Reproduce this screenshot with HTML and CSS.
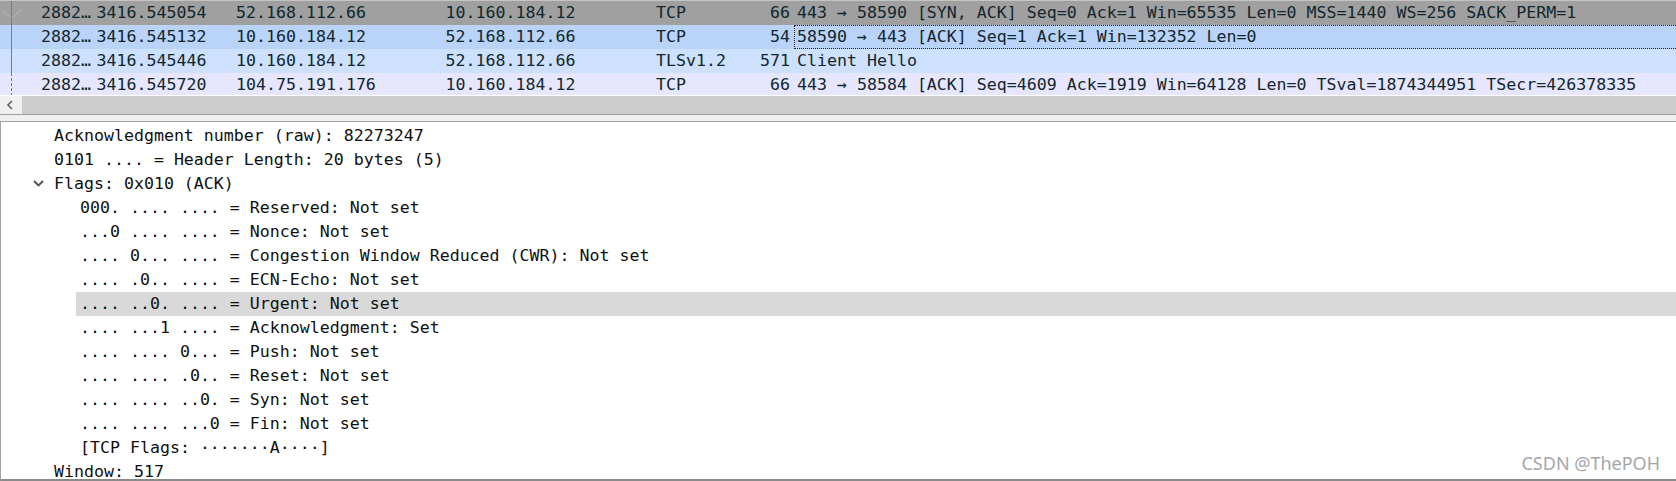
FILE: index.html
```html
<!DOCTYPE html>
<html>
<head>
<meta charset="utf-8">
<link rel="stylesheet" href="styles.css">
</head>
<body>
<div class="app">
  <div class="plist">
    <div class="rows">
      <div class="prow r-synack">
        <div class="gut"><svg width="41" height="24" viewBox="0 0 41 24"><polyline points="2,10 12,17 22,8" fill="none" stroke="#b8b8b8" stroke-width="1"/><line x1="11.5" y1="0" x2="11.5" y2="24" stroke="#7c7c7c" stroke-width="1"/></svg></div>
        <div class="c">2882…</div><div class="c">3416.545054</div><div class="c">52.168.112.66</div><div class="c">10.160.184.12</div><div class="c">TCP</div><div class="c len">66</div><div class="c info">443 → 58590 [SYN, ACK] Seq=0 Ack=1 Win=65535 Len=0 MSS=1440 WS=256 SACK_PERM=1</div>
      </div>
      <div class="prow r-sel">
        <div class="gut"><svg width="41" height="24" viewBox="0 0 41 24"><line x1="11.5" y1="0" x2="11.5" y2="24" stroke="#7c7c7c" stroke-width="1"/></svg></div>
        <div class="c">2882…</div><div class="c">3416.545132</div><div class="c">10.160.184.12</div><div class="c">52.168.112.66</div><div class="c">TCP</div><div class="c len">54</div><div class="c info focus">58590 → 443 [ACK] Seq=1 Ack=1 Win=132352 Len=0</div>
      </div>
      <div class="prow r-hover">
        <div class="gut"><svg width="41" height="24" viewBox="0 0 41 24"><line x1="11.5" y1="0" x2="11.5" y2="24" stroke="#7c7c7c" stroke-width="1"/></svg></div>
        <div class="c">2882…</div><div class="c">3416.545446</div><div class="c">10.160.184.12</div><div class="c">52.168.112.66</div><div class="c">TLSv1.2</div><div class="c len">571</div><div class="c info">Client Hello</div>
      </div>
      <div class="prow r-tcp">
        <div class="gut"><svg width="41" height="24" viewBox="0 0 41 24"><line x1="11.5" y1="0" x2="11.5" y2="24" stroke="#7c7c7c" stroke-width="1" stroke-dasharray="3,2"/></svg></div>
        <div class="c">2882…</div><div class="c">3416.545720</div><div class="c">104.75.191.176</div><div class="c">10.160.184.12</div><div class="c">TCP</div><div class="c len">66</div><div class="c info">443 → 58584 [ACK] Seq=4609 Ack=1919 Win=64128 Len=0 TSval=1874344951 TSecr=426378335</div>
      </div>
    </div>
    <div class="hscroll">
      <div class="sbtn"><svg width="21" height="18" viewBox="0 0 21 18"><polyline points="12,5 8,9 12,13" fill="none" stroke="#606060" stroke-width="1.6"/></svg></div>
      <div class="thumb"></div>
    </div>
  </div>
  <div class="split"></div>
  <div class="details">
    <div class="drow l1">Acknowledgment number (raw): 82273247</div>
    <div class="drow l1">0101 .... = Header Length: 20 bytes (5)</div>
    <div class="drow l0"><span class="chev"><svg width="11" height="24" viewBox="0 0 11 24"><polyline points="1,9 5.5,13.5 10,9" fill="none" stroke="#505050" stroke-width="1.8"/></svg></span>Flags: 0x010 (ACK)</div>
    <div class="drow l2">000. .... .... = Reserved: Not set</div>
    <div class="drow l2">...0 .... .... = Nonce: Not set</div>
    <div class="drow l2">.... 0... .... = Congestion Window Reduced (CWR): Not set</div>
    <div class="drow l2">.... .0.. .... = ECN-Echo: Not set</div>
    <div class="drow l2 hl">.... ..0. .... = Urgent: Not set</div>
    <div class="drow l2">.... ...1 .... = Acknowledgment: Set</div>
    <div class="drow l2">.... .... 0... = Push: Not set</div>
    <div class="drow l2">.... .... .0.. = Reset: Not set</div>
    <div class="drow l2">.... .... ..0. = Syn: Not set</div>
    <div class="drow l2">.... .... ...0 = Fin: Not set</div>
    <div class="drow l2">[TCP Flags: ·······A····]</div>
    <div class="drow l1">Window: 517</div>
    <div class="watermark">CSDN @ThePOH</div>
  </div>
</div>
</body>
</html>
```

FILE: styles.css
```css
html, body {
  margin: 0;
  padding: 0;
  background: #ffffff;
}
.app {
  width: 1676px;
  height: 481px;
  display: flex;
  flex-direction: column;
  overflow: hidden;
  font-family: "DejaVu Sans Mono", "Liberation Mono", monospace;
  font-size: 16.6px;
}
.plist {
  display: flex;
  flex-direction: column;
  background: #ffffff;
}
.rows {
  height: 95px;
  overflow: hidden;
  border-bottom: 1px solid #ffffff;
}
.prow {
  display: grid;
  grid-template-columns: 41px 55.5px 139.5px 209.5px 210.5px 84px 54px 1fr;
  height: 24px;
  line-height: 24px;
  color: #12272e;
  white-space: pre;
}
.prow:first-child {
  border-top: 1px solid #c4c4c4;
}
.r-synack { background: #a0a0a0; }
.r-sel { background: #b9d3f9; }
.r-hover { background: #cde0fd; }
.r-tcp { background: #e7e6ff; }
.gut svg { display: block; }
.c { overflow: hidden; }
.len {
  text-align: right;
  padding-right: 4px;
}
.info {
  padding-left: 3px;
}
.focus {
  border: 1px dotted #222222;
  border-right: none;
  padding-left: 2px;
  line-height: 22px;
}
.hscroll {
  display: flex;
  height: 18px;
  background: #f0f0f0;
  border-bottom: 1px solid #a0a0a0;
}
.sbtn {
  width: 21px;
  height: 18px;
}
.sbtn svg { display: block; }
.thumb {
  flex: 1;
  margin-left: 1px;
  background: #cdcdcd;
}
.split {
  height: 6px;
  background: #f0f0f0;
}
.details {
  position: relative;
  flex: 1;
  min-height: 0;
  overflow: hidden;
  border-top: 1px solid #a0a0a0;
  border-left: 1px solid #a0a0a0;
  border-bottom: 2px solid #8a8a8a;
  padding-top: 2px;
  color: #101010;
}
.drow {
  height: 24px;
  line-height: 24px;
  white-space: pre;
}
.l0 {
  display: flex;
  padding-left: 32px;
}
.chev {
  width: 11px;
  margin-right: 10px;
}
.chev svg { display: block; }
.l1 { padding-left: 53px; }
.l2 { padding-left: 79px; }
.hl {
  margin-left: 75px;
  padding-left: 4px;
  background: #d9d9d9;
}
.watermark {
  position: absolute;
  right: 16px;
  bottom: 4px;
  font-family: "Noto Sans", "Open Sans", sans-serif;
  font-size: 18px;
  line-height: 24px;
  color: #a6a6a6;
}
```
